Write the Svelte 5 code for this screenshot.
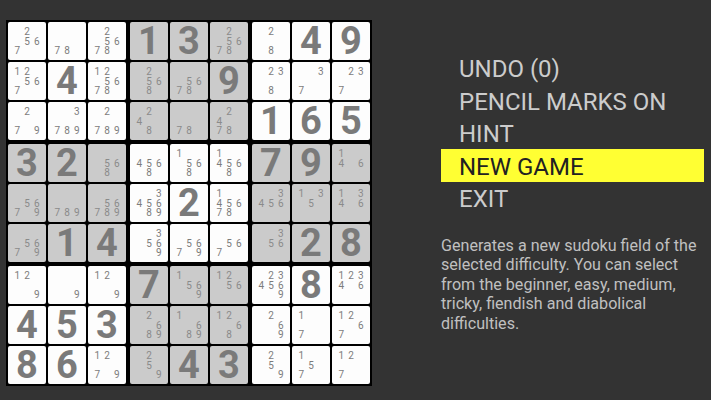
<script>
  // numbers are placed digits, strings are the pencil marks of a cell
  const rows = [
    ['2567', '78', '25678', 1, 3, '25678', '28', 4, 9],
    ['12567', 4, '125678', '2568', '5678', 9, '238', '37', '237'],
    ['279', '3789', '2789', '248', '78', '2478', 1, 6, 5],
    [3, 2, '568', '4568', '1568', '14568', 7, 9, '146'],
    ['5679', '789', '56789', '345689', 2, '145678', '3456', '135', '1346'],
    ['5679', 1, 4, '3569', '5679', '567', '356', 2, 8],
    ['129', '9', '129', 7, '1569', '1256', '234569', 8, '12346'],
    [4, 5, 3, '2689', '1689', '1268', '269', '17', '1267'],
    [8, 6, '1279', '259', 4, 3, '259', '157', '127']
  ];

  const menu = ['UNDO (0)', 'PENCIL MARKS ON', 'HINT', 'NEW GAME', 'EXIT'];
  const digits = ['1', '2', '3', '4', '5', '6', '7', '8', '9'];
  const thirds = [0, 1, 2];

  let selected = $state(3);

  // the nine cells of one 3x3 box
  function boxCells(br, bc) {
    return thirds.flatMap((r) => thirds.map((c) => rows[br * 3 + r][bc * 3 + c]));
  }
</script>

<div class="page">
  <div class="board">
    {#each thirds as br}
      {#each thirds as bc}
        <div class="box" class:shaded={(br + bc) % 2 === 1}>
          {#each boxCells(br, bc) as cell}
            <div class="cell">
              {#if typeof cell === 'number'}
                <span class="value">{cell}</span>
              {:else}
                <div class="marks">
                  {#each digits as d}
                    <span>{cell.includes(d) ? d : ''}</span>
                  {/each}
                </div>
              {/if}
            </div>
          {/each}
        </div>
      {/each}
    {/each}
  </div>

  <div class="panel">
    <ul class="menu">
      {#each menu as item, i}
        <li class:active={i === selected} onpointerenter={() => (selected = i)}>{item}</li>
      {/each}
    </ul>
    <p class="help">Generates a new sudoku field of the selected difficulty. You can select from the beginner, easy, medium, tricky, fiendish and diabolical difficulties.</p>
  </div>
</div>

<style>
  :global(body) {
    margin: 0;
    background: #333333;
  }

  .page {
    width: 711px;
    height: 400px;
    display: flex;
    align-items: flex-start;
    padding: 20px 0 0 6px;
    box-sizing: border-box;
    background: #333333;
    font-family: Roboto, "Liberation Sans", sans-serif;
    overflow: hidden;
  }

  .board {
    display: grid;
    grid-template-columns: repeat(3, 118px);
    gap: 4px;
    padding: 2px;
    background: #000000;
  }

  .box {
    display: grid;
    grid-template-columns: repeat(3, 38px);
    grid-auto-rows: 38px;
    gap: 2px;
  }

  .cell {
    display: flex;
    align-items: center;
    justify-content: center;
    background: #fdfdfd;
    border-radius: 2px;
  }

  .shaded .cell {
    background: #cbcbcb;
  }

  .value {
    font-size: 38px;
    font-weight: 700;
    line-height: 38px;
    color: #7a7a7a;
  }

  .marks {
    display: grid;
    grid-template-columns: repeat(3, 9.8px);
    grid-auto-rows: 9.8px;
    padding-top: 1px;
    font-size: 10px;
    line-height: 9.8px;
    text-align: center;
    color: #7c7c7c;
  }

  .shaded .marks {
    color: #8a8a8a;
  }

  .panel {
    width: 263px;
    margin: 31.5px 0 0 69px;
    flex: none;
  }

  .menu {
    list-style: none;
    margin: 0;
    padding: 0;
  }

  .menu li {
    height: 32.5px;
    box-sizing: border-box;
    padding: 3.5px 0 0 18px;
    font-size: 24px;
    line-height: 29px;
    color: #cccccc;
  }

  .menu li.active {
    background: #ffff33;
    color: #222222;
  }

  .help {
    margin: 21.5px 0 0;
    font-size: 16.1px;
    line-height: 19.5px;
    color: #c0c0c0;
  }
</style>
